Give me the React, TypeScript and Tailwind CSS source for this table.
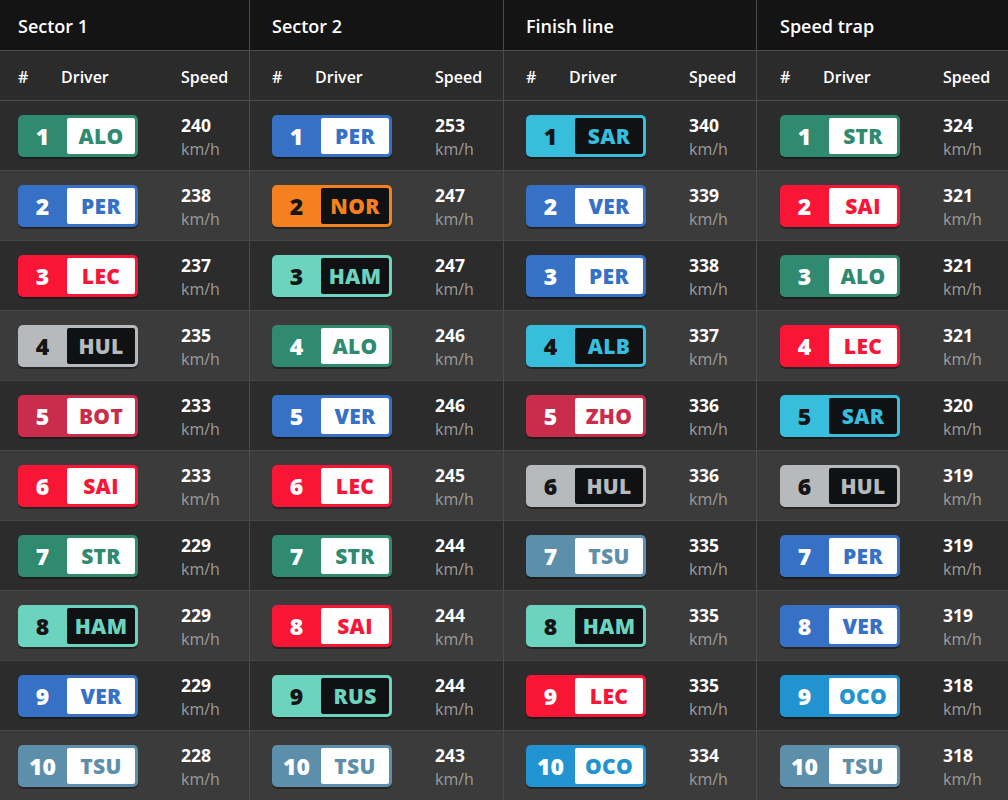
import React from "react";

type Team = { bg: string; dark: boolean; text: string };

const T: Record<string, Team> = {
  AM: { bg: "bg-[#2f8a6f]", dark: false, text: "text-[#2f8a6f]" },
  RB: { bg: "bg-[#3671c6]", dark: false, text: "text-[#3671c6]" },
  FE: { bg: "bg-[#f91536]", dark: false, text: "text-[#f91536]" },
  HA: { bg: "bg-[#b6babd]", dark: true, text: "text-[#b6babd]" },
  AR: { bg: "bg-[#c92d4b]", dark: false, text: "text-[#c92d4b]" },
  ME: { bg: "bg-[#6cd3bf]", dark: true, text: "text-[#6cd3bf]" },
  AT: { bg: "bg-[#5e8faa]", dark: false, text: "text-[#5e8faa]" },
  WI: { bg: "bg-[#37bedd]", dark: true, text: "text-[#37bedd]" },
  MC: { bg: "bg-[#f58020]", dark: true, text: "text-[#f58020]" },
  AL: { bg: "bg-[#2293d1]", dark: false, text: "text-[#2293d1]" },
};

const TEAM: Record<string, string> = {
  ALO: "AM", STR: "AM", PER: "RB", VER: "RB", LEC: "FE", SAI: "FE",
  HUL: "HA", BOT: "AR", ZHO: "AR", HAM: "ME", RUS: "ME", TSU: "AT",
  SAR: "WI", ALB: "WI", NOR: "MC", OCO: "AL",
};

type Col = { title: string; pad: string; width: string; border: boolean; rows: [string, number][] };

const cols: Col[] = [
  {
    title: "Sector 1", pad: "pl-[18px]", width: "w-[250px]", border: true,
    rows: [["ALO", 240], ["PER", 238], ["LEC", 237], ["HUL", 235], ["BOT", 233], ["SAI", 233], ["STR", 229], ["HAM", 229], ["VER", 229], ["TSU", 228]],
  },
  {
    title: "Sector 2", pad: "pl-[22px]", width: "w-[254px]", border: true,
    rows: [["PER", 253], ["NOR", 247], ["HAM", 247], ["ALO", 246], ["VER", 246], ["LEC", 245], ["STR", 244], ["SAI", 244], ["RUS", 244], ["TSU", 243]],
  },
  {
    title: "Finish line", pad: "pl-[22px]", width: "w-[253px]", border: true,
    rows: [["SAR", 340], ["VER", 339], ["PER", 338], ["ALB", 337], ["ZHO", 336], ["HUL", 336], ["TSU", 335], ["HAM", 335], ["LEC", 335], ["OCO", 334]],
  },
  {
    title: "Speed trap", pad: "pl-[23px]", width: "w-[251px]", border: false,
    rows: [["STR", 324], ["SAI", 321], ["ALO", 321], ["LEC", 321], ["SAR", 320], ["HUL", 319], ["PER", 319], ["VER", 319], ["OCO", 318], ["TSU", 318]],
  },
];

function Badge({ pos, code }: { pos: number; code: string }) {
  const t = T[TEAM[code]];
  return (
    <div className={`flex h-[42px] w-[120px] rounded-[5px] ${t.bg} shadow-[0_2px_0_rgba(0,0,0,0.35)]`}>
      <div
        className={`flex w-[49px] shrink-0 items-center justify-center pt-[2px] text-[23px] font-extrabold ${t.dark ? "text-[#151515]" : "text-white"}`}
      >
        {pos}
      </div>
      <div
        className={`my-[3px] mr-[3px] flex flex-1 items-center justify-center rounded-[2px] pt-[2px] text-[21px] font-extrabold tracking-[0.3px] ${t.dark ? "bg-[#0f1113]" : "bg-white"} ${t.text}`}
      >
        {code}
      </div>
    </div>
  );
}

export default function App() {
  return (
    <div
      className="flex h-[800px] w-[1008px] overflow-hidden bg-[#2b2b2b] text-white"
      style={{ fontFamily: '"Open Sans", "Noto Sans", sans-serif' }}
    >
      {cols.map((c, ci) => (
        <div key={ci} className={`flex shrink-0 flex-col ${c.width} ${c.border ? "border-r border-[#4a4a4a]" : ""}`}>
          <div className={`flex h-[50px] shrink-0 items-center bg-[#141414] ${c.pad} pt-[3px] text-[18px] font-semibold`}>
            {c.title}
          </div>
          <div className={`flex h-[51px] shrink-0 items-center border-y border-[#4e4e4e] bg-[#2b2b2b] ${c.pad} pt-[2px] text-[16px] font-semibold`}>
            <span className="w-[43px]">#</span>
            <span className="w-[120px]">Driver</span>
            <span>Speed</span>
          </div>
          {c.rows.map(([code, sp], i) => (
            <div
              key={i}
              className={`flex h-[70px] shrink-0 items-center border-b border-[#464646] ${c.pad} ${i % 2 === 0 ? "bg-[#2c2c2c]" : "bg-[#3b3b3b]"}`}
            >
              <Badge pos={i + 1} code={code} />
              <div className="ml-[43px] flex flex-col pt-[4px]">
                <span className="text-[17.5px] font-bold leading-[23px]">{sp}</span>
                <span className="text-[16px] leading-[24px] text-[#9b9b9b]">km/h</span>
              </div>
            </div>
          ))}
        </div>
      ))}
    </div>
  );
}
